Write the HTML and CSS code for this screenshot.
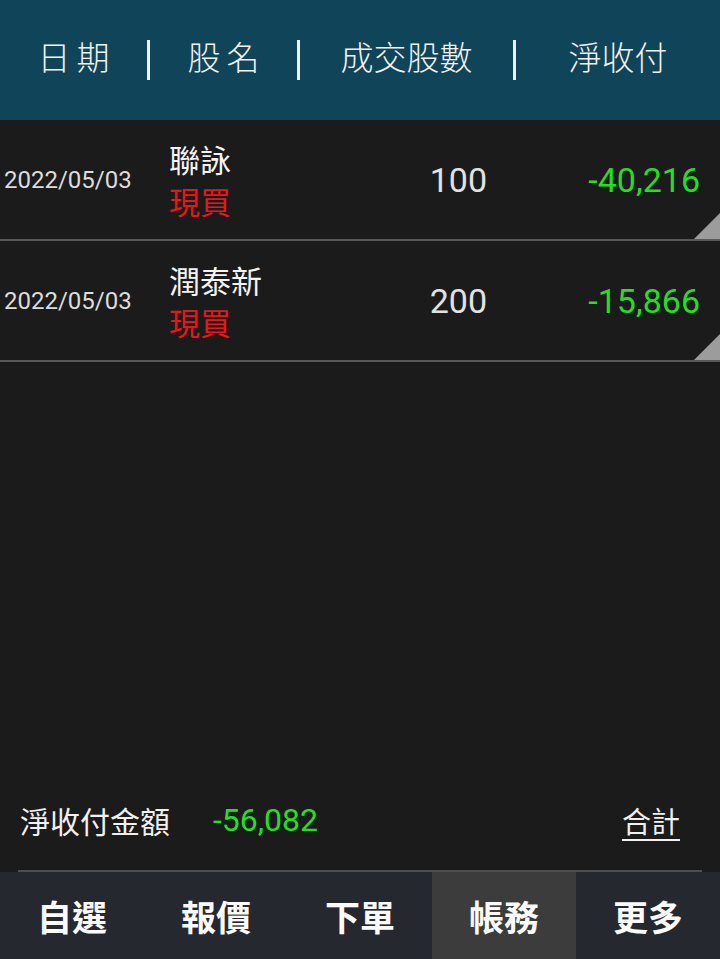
FILE: index.html
```html
<!DOCTYPE html>
<html lang="zh-Hant">
<head>
    <meta charset="UTF-8">
    <meta name="viewport" content="width=device-width, initial-scale=1.0">
    <title>帳務 - 交割明細</title>
    <link rel="stylesheet" href="styles.css">
</head>
<body>
    <div class="page">
        <header class="head">
            <div class="head-cell spaced">日期</div>
            <div class="head-cell spaced">股名</div>
            <div class="head-cell">成交股數</div>
            <div class="head-cell">淨收付</div>
        </header>

        <div class="list">
            <div class="row">
                <div class="date">2022/05/03</div>
                <div class="name">
                    <span class="stock">聯詠</span>
                    <span class="kind">現買</span>
                </div>
                <div class="qty">100</div>
                <div class="net">-40,216</div>
                <span class="corner"></span>
            </div>
            <div class="row">
                <div class="date">2022/05/03</div>
                <div class="name">
                    <span class="stock">潤泰新</span>
                    <span class="kind">現買</span>
                </div>
                <div class="qty">200</div>
                <div class="net">-15,866</div>
                <span class="corner"></span>
            </div>
        </div>

        <div class="spacer"></div>

        <div class="summary">
            <span class="sum-label">淨收付金額</span>
            <span class="sum-value">-56,082</span>
            <a class="sum-link" href="#">合計</a>
        </div>

        <nav class="tabs">
            <div class="tab">自選</div>
            <div class="tab">報價</div>
            <div class="tab">下單</div>
            <div class="tab active">帳務</div>
            <div class="tab">更多</div>
        </nav>
    </div>
</body>
</html>
```

FILE: styles.css
```css
body {
    margin: 0;
    padding: 0;
    background-color: #1b1b1b;
    color: #e6e6e6;
    font-family: Roboto, "Noto Sans CJK TC", sans-serif;
}
.page {
    display: flex;
    flex-direction: column;
    height: 959px;
}
.head {
    display: grid;
    grid-template-columns: 147px 150px 216px 207px;
    align-items: center;
    height: 120px;
    background-color: #0f4459;
    color: #f2f2f2;
    font-family: "Noto Sans CJK TC", sans-serif;
    font-size: 33px;
    font-weight: 300;
}
.head-cell {
    display: flex;
    align-items: center;
    justify-content: center;
    box-sizing: border-box;
    height: 40px;
    padding-bottom: 8px;
    border-left: 3px solid #eef2f4;
    line-height: 1;
}
.head-cell:first-child {
    border-left: none;
}
.head-cell.spaced {
    letter-spacing: 6px;
    text-indent: 6px;
}
.row {
    position: relative;
    display: grid;
    grid-template-columns: 148px 150px 216px 206px;
    align-items: center;
    height: 119px;
    border-bottom: 2px solid #585858;
}
.date {
    padding-left: 4px;
    font-size: 24px;
    color: #dcdcdc;
}
.name {
    display: flex;
    flex-direction: column;
    padding-left: 21px;
    font-family: "Noto Sans CJK TC", sans-serif;
    font-size: 31px;
    line-height: 42px;
}
.stock {
    color: #f4f4f4;
}
.kind {
    color: #e8161b;
}
.qty {
    text-align: right;
    padding-right: 27px;
    font-size: 34px;
    color: #e2e2e2;
}
.net {
    text-align: right;
    padding-right: 20px;
    font-size: 34px;
    color: #25de25;
}
.corner {
    position: absolute;
    right: 0;
    bottom: 0;
    width: 26px;
    height: 26px;
    background-color: #9c9c9c;
    clip-path: polygon(100% 0, 100% 100%, 0 100%);
}
.spacer {
    flex: 1;
}
.summary {
    display: flex;
    align-items: center;
    height: 100px;
    margin: 0 18px;
    padding: 0 22px 0 2px;
    border-bottom: 2px solid #4e4e4e;
}
.sum-label {
    font-family: "Noto Sans CJK TC", sans-serif;
    font-size: 30px;
    color: #f0f0f0;
}
.sum-value {
    margin-left: 43px;
    font-size: 32px;
    color: #25de25;
}
.sum-link {
    margin-left: auto;
    font-family: "Noto Sans CJK TC", sans-serif;
    font-size: 29px;
    color: #f0f0f0;
    text-decoration: underline;
    text-underline-offset: 6px;
}
.tabs {
    display: grid;
    grid-template-columns: repeat(5, 1fr);
    height: 87px;
    background-color: #262830;
}
.tab {
    display: flex;
    align-items: center;
    justify-content: center;
    font-family: "Noto Sans CJK TC", sans-serif;
    font-size: 35px;
    font-weight: bold;
    color: #fafafa;
}
.tab.active {
    background-color: #3c3c3c;
}
```
